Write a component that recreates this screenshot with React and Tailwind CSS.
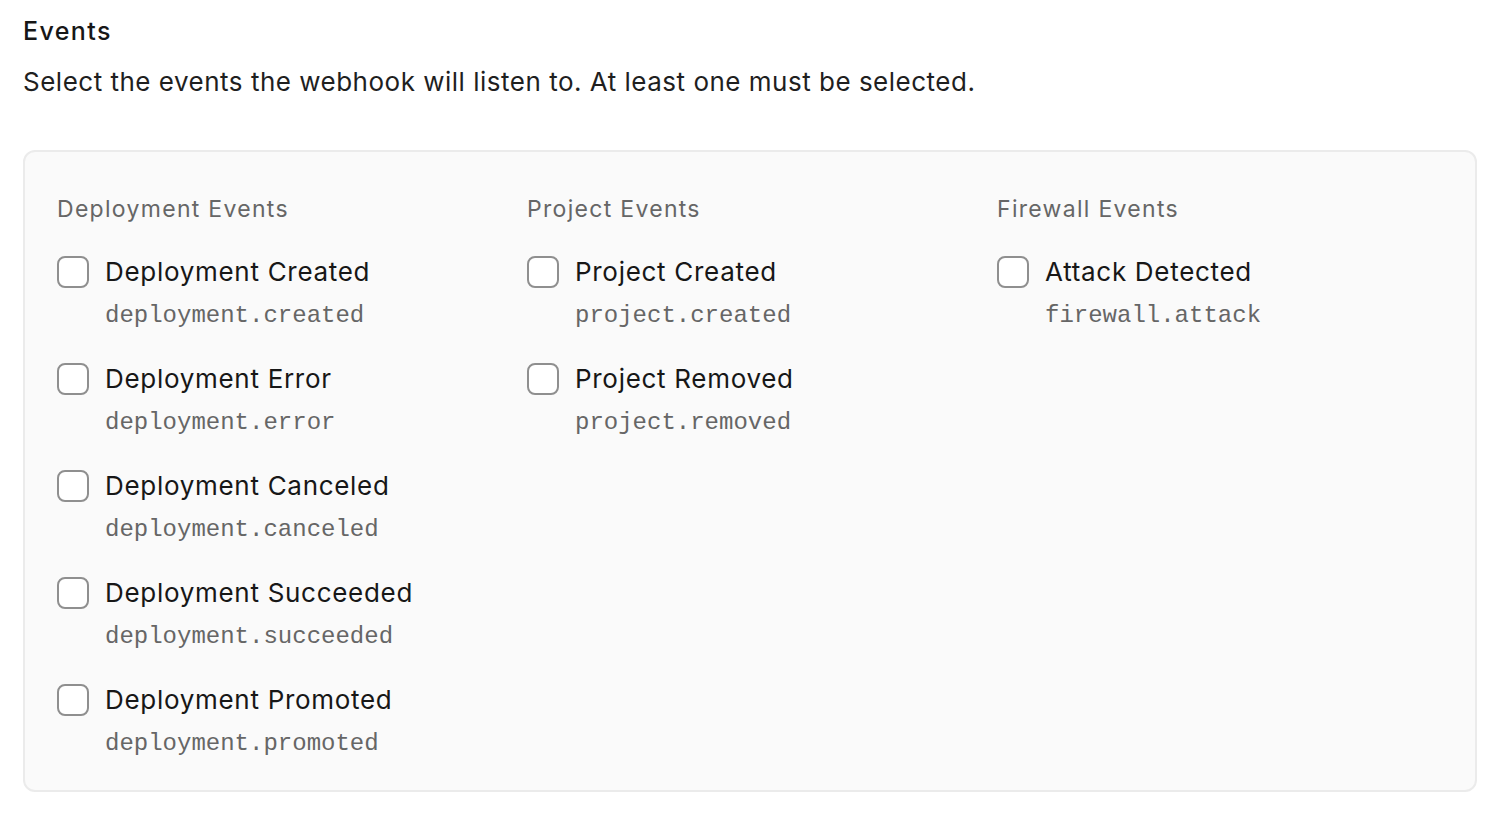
import React from "react";

const columns = [
  {
    title: "Deployment Events",
    items: [
      ["Deployment Created", "deployment.created"],
      ["Deployment Error", "deployment.error"],
      ["Deployment Canceled", "deployment.canceled"],
      ["Deployment Succeeded", "deployment.succeeded"],
      ["Deployment Promoted", "deployment.promoted"],
    ],
  },
  {
    title: "Project Events",
    items: [
      ["Project Created", "project.created"],
      ["Project Removed", "project.removed"],
    ],
  },
  {
    title: "Firewall Events",
    items: [["Attack Detected", "firewall.attack"]],
  },
];

export default function App() {
  return (
    <div
      className="w-[1506px] h-[820px] bg-white px-[23px] pt-[15px] text-[#171717]"
      style={{ fontFamily: "Inter, 'Noto Sans', sans-serif" }}
    >
      <h2 className="text-[25px] leading-[32px] font-medium tracking-[1.4px]">Events</h2>
      <p className="mt-[18px] text-[26px] leading-[34px] tracking-[0.5px] text-[#1f1f1f]">
        Select the events the webhook will listen to. At least one must be selected.
      </p>
      <div className="mt-[51px] w-[1454px] h-[642px] rounded-[12px] border-2 border-[#ebebeb] bg-[#fafafa] px-[32px] pt-[42px] grid grid-cols-3 gap-x-[24px] items-start">
        {columns.map((col) => (
          <div key={col.title} className="flex flex-col">
            <div className="text-[23px] leading-[30px] tracking-[1.3px] text-[#666666]">{col.title}</div>
            <div className="mt-[32px] flex flex-col gap-[31px]">
              {col.items.map(([label, code]) => (
                <div key={code} className="flex gap-[16px]">
                  <div className="w-[32px] h-[32px] shrink-0 rounded-[8px] border-2 border-[#8f8f8f] bg-white" />
                  <div className="flex flex-col">
                    <div className="text-[26px] leading-[32px] tracking-[0.7px] text-[#171717]">{label}</div>
                    <div
                      className="mt-[12px] text-[24px] leading-[32px] text-[#666666]"
                      style={{ fontFamily: "'Liberation Mono', 'DejaVu Sans Mono', monospace" }}
                    >
                      {code}
                    </div>
                  </div>
                </div>
              ))}
            </div>
          </div>
        ))}
      </div>
    </div>
  );
}
